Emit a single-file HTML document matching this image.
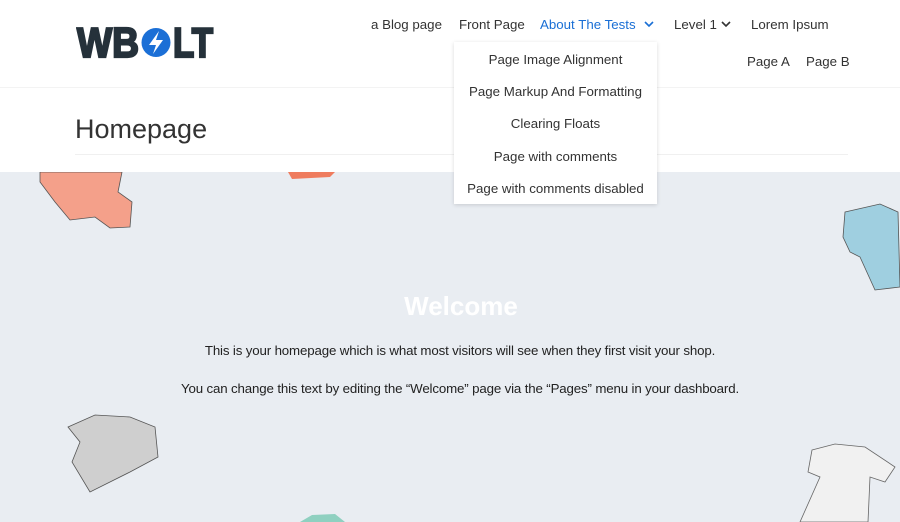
<!DOCTYPE html>
<html><head><meta charset="utf-8"><style>
*{margin:0;padding:0;box-sizing:border-box}
body{width:900px;height:522px;overflow:hidden;background:#fff;font-family:"Liberation Sans",sans-serif;color:#333;position:relative}
.nav{position:absolute;font-size:13.3px;color:#333;white-space:nowrap}
.hero{position:absolute;left:0;top:172px;width:900px;height:350px;background:#e9edf2;overflow:hidden}
.dd{position:absolute;left:454px;top:42px;width:203px;height:162px;background:#fff;box-shadow:0 1px 4px rgba(0,0,0,.15);font-size:13.3px;text-align:center}
.dd div{position:absolute;left:0;width:100%}
.c{position:absolute;text-align:center;width:900px;left:0}
</style></head><body>
<svg style="position:absolute;left:76px;top:26px" width="140" height="34" viewBox="0 0 140 34">
<text x="1" y="31" font-family="Liberation Sans" font-weight="bold" font-size="42" fill="#25313a" stroke="#25313a" stroke-width="2.2" textLength="62" lengthAdjust="spacingAndGlyphs">WB</text>
<circle cx="80" cy="16.5" r="14.5" fill="#1b6fd6"/>
<path d="M83 5 L73 19 L80 19 L77 28 L87 14 L80 14 Z" fill="#fff"/>
<text x="97" y="31" font-family="Liberation Sans" font-weight="bold" font-size="42" fill="#25313a" stroke="#25313a" stroke-width="2.2" textLength="40" lengthAdjust="spacingAndGlyphs">LT</text>
</svg>
<div class="nav" style="left:371px;top:17px">a Blog page</div>
<div class="nav" style="left:459px;top:17px">Front Page</div>
<div class="nav" style="left:540px;top:17px;color:#1a6fd5">About The Tests</div>
<svg style="position:absolute;left:644px;top:20px" width="10" height="8"><path d="M1 2 L5 6 L9 2" stroke="#1a6fd5" stroke-width="1.6" fill="none"/></svg>
<div class="nav" style="left:674px;top:17px">Level 1</div>
<svg style="position:absolute;left:721px;top:20px" width="10" height="8"><path d="M1 2 L5 6 L9 2" stroke="#333" stroke-width="1.6" fill="none"/></svg>
<div class="nav" style="left:751px;top:17px">Lorem Ipsum</div>
<div class="nav" style="left:747px;top:54px">Page A</div>
<div class="nav" style="left:806px;top:54px">Page B</div>
<div style="position:absolute;left:0;top:87px;width:900px;height:1px;background:#f3f3f3"></div>
<div style="position:absolute;left:75px;top:114px;font-size:27px;color:#333">Homepage</div>
<div style="position:absolute;left:75px;top:154px;width:773px;height:1px;background:#f0f0f0"></div>
<div class="hero">
<svg width="900" height="350" style="position:absolute;left:0;top:0">
<path d="M40 0 L122 0 L118 20 L132 30 L130 55 L110 56 L95 45 L70 48 L55 30 L40 10 Z" fill="#f4a08a" stroke="#555" stroke-width="0.8"/>
<path d="M288 0 L335 0 L330 5 L292 7 Z" fill="#ef7c5e"/>
<path d="M845 40 L880 32 L898 40 L900 115 L875 118 L860 85 L850 80 L843 65 Z" fill="#9fcfe0" stroke="#555" stroke-width="0.8"/>
<path d="M68 255 L95 243 L130 245 L155 255 L158 285 L130 300 L90 320 L72 290 L80 270 Z" fill="#cfcfcf" stroke="#555" stroke-width="0.8"/>
<path d="M812 278 L835 272 L865 275 L895 295 L885 310 L870 305 L868 350 L800 350 L820 305 L808 300 Z" fill="#f1f1f1" stroke="#666" stroke-width="0.8"/>
<path d="M300 350 L312 343 L335 342 L345 350 Z" fill="#8fd0c0"/>
</svg>
</div>
<div class="c" style="top:291px;font-size:26px;font-weight:bold;color:#fff;left:11px">Welcome</div>
<div class="c" style="top:343px;font-size:13.3px;color:#222;left:10px;letter-spacing:-0.15px">This is your homepage which is what most visitors will see when they first visit your shop.</div>
<div class="c" style="top:381px;font-size:13.3px;color:#222;left:10px;letter-spacing:-0.15px">You can change this text by editing the “Welcome” page via the “Pages” menu in your dashboard.</div>
<div class="dd">
<div style="top:10px">Page Image Alignment</div>
<div style="top:42px">Page Markup And Formatting</div>
<div style="top:74px">Clearing Floats</div>
<div style="top:107px">Page with comments</div>
<div style="top:139px">Page with comments disabled</div>
</div>
</body></html>
